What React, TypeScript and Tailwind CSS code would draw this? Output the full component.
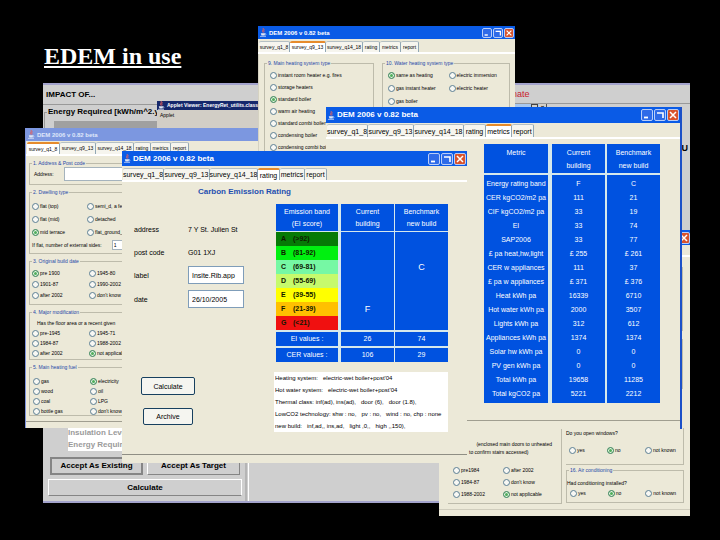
import type { ReactNode } from "react";

const TABS = ["survey_q1_8", "survey_q9_13", "survey_q14_18", "rating", "metrics", "report"];

function JavaCup() {
  return (
    <svg viewBox="0 0 10 12" className="h-[9px] w-[8px] shrink-0" fill="none">
      <path d="M5 0C7 2 3 3 5 6M7 2C5 4 7 4 6 6" stroke="#e8605a" strokeWidth="1.2" />
      <path d="M2 7H8L7 10H3Z" fill="#dfe6f5" />
      <path d="M8 7.500C10 7.500 9 9.500 7.500 9.500M1 11.200H9" stroke="#dfe6f5" strokeWidth="0.900" />
    </svg>
  );
}

function Controls({ size }: { size: string }) {
  const base = `${size} flex items-center justify-center rounded-[2px] border border-[#b9cdf8]`;
  return (
    <div className="ml-auto flex gap-px">
      <button aria-label="Minimize" className={`${base} bg-[#2f6be8]`}>
        <svg viewBox="0 0 10 10" className="size-full"><path d="M2 7.500H6" stroke="#fff" strokeWidth="1.800" /></svg>
      </button>
      <button aria-label="Maximize" className={`${base} bg-[#2f6be8]`}>
        <svg viewBox="0 0 10 10" className="size-full" fill="none"><path d="M2 3H8V8" stroke="#fff" strokeWidth="1.600" /></svg>
      </button>
      <button aria-label="Close" className={`${base} bg-[#d9532c]`}>
        <svg viewBox="0 0 10 10" className="size-full"><path d="M2 2L8 8M8 2L2 8" stroke="#fff" strokeWidth="1.500" /></svg>
      </button>
    </div>
  );
}

type WinProps = {
  place: string;
  bar: string;
  title: string;
  controls?: string;
  tabRow: string;
  widths: string[];
  active: number;
  children: ReactNode;
};

function Win({ place, bar, title, controls, tabRow, widths, active, children }: WinProps) {
  return (
    <section className={`absolute flex flex-col overflow-hidden bg-[#ece9d8] ${place}`}>
      <header className={`flex shrink-0 items-center gap-[2px] px-px ${bar}`}>
        <JavaCup />
        <h2 className={`whitespace-nowrap font-bold ${title}`}>DEM 2006 v 0.82 beta</h2>
        {controls && <Controls size={controls} />}
      </header>
      <nav className={`flex shrink-0 items-end border-b-2 border-white pl-px ${tabRow}`}>
        {TABS.map((t, i) => (
          <button
            key={t}
            className={`flex h-full shrink-0 items-center justify-center whitespace-nowrap rounded-t-[2px] border-r border-[#91a7b4] ${widths[i]} ${
              i === active ? "border-t-2 border-t-[#e68b2c] bg-white" : "border-t border-t-[#b5c0c4] bg-[#f6f5ee]"
            }`}
          >
            {t}
          </button>
        ))}
      </nav>
      {children}
    </section>
  );
}

function Radio({ name, label, on }: { name: string; label: string; on?: boolean }) {
  return (
    <label className="flex min-w-0 items-center gap-px whitespace-nowrap">
      <input
        type="radio"
        name={name}
        defaultChecked={on}
        className="size-[7px] shrink-0 appearance-none rounded-full border border-[#5b7f93] bg-[#f8f8f4] checked:border-[#4a8a6a] checked:bg-[#4fae5c] checked:shadow-[inset_0_0_0_1px_#e8f4e4]"
      />
      {label}
    </label>
  );
}

function Group({ legend, className, children }: { legend: string; className: string; children: ReactNode }) {
  return (
    <fieldset className={`min-w-0 border border-[#bdbbab] ${className}`}>
      <legend className="ml-[2px] h-[8px] whitespace-nowrap px-px leading-[8px] text-[#1f48a8]">{legend}</legend>
      {children}
    </fieldset>
  );
}

function Options({ name, items, on, className }: { name: string; items: string[]; on: number; className: string }) {
  return (
    <div className={`grid ${className}`}>
      {items.map((t, i) => (
        <Radio key={t} name={name} label={t} on={i === on} />
      ))}
    </div>
  );
}

function ImpactWindow() {
  return (
    <section className="absolute left-[43px] top-[83px] flex h-[420px] w-[647px] flex-col justify-between overflow-hidden border-y-2 border-[#a3a3cc] bg-[#cfcfcf] font-bold">
      <div className="flex">
        <div className="w-[114px] shrink-0">
          <h2 className="h-[20px] border-b border-[#999] pl-[3px] text-[8px] leading-[20px]">IMPACT OF...</h2>
          <fieldset className="ml-px mt-[2px] h-[40px] border border-r-0 border-[#999]">
            <legend className="ml-[2px] h-[10px] whitespace-nowrap px-px text-[8px] leading-[10px]">Energy Required [kWh/m^2.y]</legend>
            <div className="ml-[9px] mt-[4px] h-[20px] bg-[#a0a0a0]" />
          </fieldset>
        </div>
        <div className="mt-[16px] w-[320px] shrink-0 bg-[#d2cec6] text-[5px]">
          <div className="flex h-[9px] items-center gap-[2px] bg-[#15286c] text-white">
            <JavaCup />
            Applet Viewer: EnergyRet_utilits.class
          </div>
          <p className="pl-[3px] font-normal leading-[10px]">Applet</p>
        </div>
        <div className="flex-1">
          <h2 className="h-[19px] border-b border-[#999] pl-[22px] text-[9px] font-normal leading-[19px] text-[#c8202c]">Climate</h2>
          <div className="flex h-[40px] w-[70px] justify-end gap-px border-r border-[#555] bg-[#a9c8ee]">
            <button aria-label="Restore" className="h-[6px] w-[7px] border border-[#444] bg-[#d4d0c8]" />
            <button aria-label="Close applet" className="h-[6px] w-[7px] bg-[#d4d0c8] text-[6px] leading-[6px]">×</button>
          </div>
          <p className="pr-[2px] text-right text-[9px] leading-[9px]">U</p>
        </div>
      </div>
      <div className="flex text-[8px]">
        <div className="w-[204px] shrink-0 border-r-2 border-[#b5b5b5]">
          <div className="ml-[25px] w-[70px] bg-white leading-[12px] text-[#9b9b9b]">
            <p className="whitespace-nowrap">Insulation Level</p>
            <p className="whitespace-nowrap">Energy Required</p>
          </div>
          <div className="mt-[6px] grid grid-cols-2 gap-[4px] pl-[7px] pr-[5px]">
            <button className="h-[18px] whitespace-nowrap border-2 border-[#858585]">Accept As Existing</button>
            <button className="h-[18px] whitespace-nowrap border border-[#858585] border-l-white border-t-white">Accept As Target</button>
          </div>
          <button className="mb-[5px] ml-[5px] mt-[4px] block h-[17px] w-[194px] border border-white border-b-[#858585]">Calculate</button>
        </div>
        <div className="ml-px flex-1 border-l border-white" />
      </div>
    </section>
  );
}

function SystemsWindow() {
  return (
    <Win
      place="left-[258px] top-[26px] h-[140px] w-[257px] text-[5px]"
      bar="h-[13px] bg-[#0a5be6] text-white"
      title="text-[6px]"
      controls="size-[10px]"
      tabRow="h-[15px] pt-[2px]"
      widths={["w-[31px]", "w-[36px]", "w-[37px]", "w-[17px]", "w-[21px]", "w-[18px]"]}
      active={1}
    >
      <div className="flex flex-1 gap-[8px] border-l border-[#d5d2c2] px-[5px] pt-[5px]">
        <Group legend="9. Main heating system type" className="w-[110px]">
          <Options
            name="heating"
            on={2}
            className="auto-rows-[12px] pl-[5px] pt-[2px]"
            items={["instant room heater e.g. fires", "storage heaters", "standard boiler", "warm air heating", "standard combi boiler", "condensing boiler", "condensing combi boiler"]}
          />
        </Group>
        <Group legend="10. Water heating system type" className="flex-1">
          <Options
            name="water"
            on={0}
            className="auto-rows-[13px] grid-cols-2 pl-[5px] pt-[2px]"
            items={["same as heating", "electric immersion", "gas instant heater", "electric heater", "gas boiler"]}
          />
        </Group>
      </div>
    </Win>
  );
}

function DwellingWindow() {
  return (
    <Win
      place="left-[25px] top-[128px] h-[300px] w-[240px] border-l border-[#7d93dc] text-[5px]"
      bar="h-[13px] bg-[#7c97e0] text-[#dfe7fa]"
      title="text-[6px]"
      tabRow="h-[15px] pt-px"
      widths={["w-[33px]", "w-[36px]", "w-[38px]", "w-[17px]", "w-[20px]", "w-[18px]"]}
      active={0}
    >
      <div className="flex flex-1 flex-col gap-[3px] pl-[3px] pt-[3px]">
        <Group legend="1. Address & Post code" className="h-[26px]">
          <label className="flex items-center gap-[10px] pl-[4px]">
            Address:
            <input className="h-[14px] flex-1 border border-[#a5b3bd] bg-white" />
          </label>
        </Group>
        <Group legend="2. Dwelling type" className="h-[66px]">
          <Options
            name="dwelling"
            on={4}
            className="auto-rows-[13px] grid-cols-[55px_1fr] pl-[2px] pt-[4px]"
            items={["flat (top)", "semi_d, a few", "flat (mid)", "detached", "mid terrace", "flat_ground_"]}
          />
          <label className="flex h-[12px] items-center gap-[10px] whitespace-nowrap pl-[2px]">
            If flat, number of external sides:
            <input defaultValue="1" className="h-[10px] w-[20px] border border-[#a5b3bd] bg-white px-px" />
          </label>
        </Group>
        <Group legend="3. Original build date" className="h-[48px]">
          <Options
            name="built"
            on={0}
            className="auto-rows-[11px] grid-cols-[57px_1fr] pl-[2px] pt-[3px]"
            items={["pre 1900", "1945-80", "1901-87", "1990-2002", "after 2002", "don't know"]}
          />
        </Group>
        <Group legend="4. Major modification" className="h-[52px]">
          <p className="whitespace-nowrap pl-[7px] pt-[2px] leading-[10px]">Has the floor area or a recent given</p>
          <Options
            name="modified"
            on={5}
            className="auto-rows-[10px] grid-cols-[57px_1fr] pl-[2px]"
            items={["pre-1945", "1945-71", "1984-87", "1988-2002", "after 2002", "not applicable"]}
          />
        </Group>
        <Group legend="5. Main heating fuel" className="h-[53px]">
          <Options
            name="fuel"
            on={1}
            className="auto-rows-[10px] grid-cols-[57px_1fr] pl-[3px] pt-[5px]"
            items={["gas", "electricity", "wood", "oil", "coal", "LPG", "bottle gas", "don't know"]}
          />
        </Group>
        <div className="-ml-[3px] mt-[2px] border-t border-[#a09e90]" />
      </div>
    </Win>
  );
}

function ConditioningWindow() {
  return (
    <section className="absolute left-[439px] top-[230px] flex h-[286px] w-[251px] flex-col bg-[#ece9d8] text-[5px]">
      <header className="flex h-[15px] shrink-0 items-center bg-[#0a5be6]">
        <Controls size="size-[12px]" />
      </header>
      <div className="mt-[10px] h-[2px] bg-white" />
      <div className="mr-[7px] mt-[10px] h-[64px] border border-[#bdbbab]" />
      <div className="mr-[7px] mt-[8px] h-[50px] border border-[#bdbbab]" />
      <div className="mt-auto flex gap-[4px] pl-[9px] pr-[6px]">
        <div className="flex h-[76px] w-[114px] flex-col border-b border-r border-[#bdbbab] pt-[12px]">
          <p className="self-end whitespace-nowrap pr-[9px] leading-[8px]">(enclosed main doors to unheated</p>
          <p className="whitespace-nowrap pl-[21px] leading-[8px]">to confirm stairs accessed)</p>
          <Options
            name="zone"
            on={5}
            className="auto-rows-[12px] grid-cols-[50px_1fr] pl-[5px] pt-[8px]"
            items={["pre1984", "after 2002", "1984-87", "don't know", "1988-2002", "not applicable"]}
          />
        </div>
        <div className="flex-1">
          <div className="h-[37px] border-b border-r border-[#bdbbab]">
            <p className="whitespace-nowrap leading-[10px]">Do you open windows?</p>
            <Options name="windows" on={1} className="grid-cols-3 pl-[3px] pt-[9px]" items={["yes", "no", "not known"]} />
          </div>
          <Group legend="16. Air conditioning" className="mt-px h-[37px]">
            <p className="whitespace-nowrap pt-[5px] leading-[8px]">Had conditioning installed?</p>
            <Options name="aircon" on={1} className="grid-cols-3 pl-[3px] pt-[3px]" items={["yes", "no", "not known"]} />
          </Group>
        </div>
      </div>
      <div className="mb-[6px] mt-[5px] border-t border-[#d0cdbd]" />
    </section>
  );
}

const METRICS = [
  ["Energy rating band", "F", "C"],
  ["CER kgCO2/m2 pa", "111", "21"],
  ["CIF kgCO2/m2 pa", "33", "19"],
  ["EI", "33", "74"],
  ["SAP2006", "33", "77"],
  ["£ pa heat,hw,light", "£ 255", "£ 261"],
  ["CER w appliances", "111", "37"],
  ["£ pa w appliances", "£ 371", "£ 376"],
  ["Heat kWh pa", "16339", "6710"],
  ["Hot water kWh pa", "2000", "3507"],
  ["Lights kWh pa", "312", "612"],
  ["Appliances kWh pa", "1374", "1374"],
  ["Solar hw kWh pa", "0", "0"],
  ["PV gen kWh pa", "0", "0"],
  ["Total kWh pa", "19658", "11285"],
  ["Total kgCO2 pa", "5221", "2212"],
];

function MetricsWindow() {
  return (
    <Win
      place="left-[326px] top-[107px] h-[322px] w-[356px] border-r-2 border-[#1c50c8] text-[7px]"
      bar="h-[16px] bg-[#0a5be6] text-white"
      title="text-[8px]"
      controls="size-[12px]"
      tabRow="h-[16px] pt-px"
      widths={["w-[41px]", "w-[46px]", "w-[50px]", "w-[22px]", "w-[26px]", "w-[22px]"]}
      active={4}
    >
      <table className="ml-auto mr-[20px] mt-[5px] w-[176px] table-fixed border-separate border-spacing-0 text-center text-[7px] text-white">
        <colgroup>
          <col className="w-[68px]" />
          <col className="w-[55px]" />
          <col className="w-[53px]" />
        </colgroup>
        <thead>
          <tr className="h-[31px] align-top leading-[13px]">
            {["Metric", "Current building", "Benchmark new build"].map((h, i) => (
              <th key={h} scope="col" className={`border-b-2 border-[#d5e8ec] bg-[#0052e0] px-[5px] pt-[2px] font-normal ${i === 0 ? "border-r-4" : i === 1 ? "border-r-2" : ""}`}>
                {h}
              </th>
            ))}
          </tr>
        </thead>
        <tbody>
          {METRICS.map((row, r) => (
            <tr key={r} className="h-[14px] leading-[14px]">
              {row.map((c, i) => (
                <td key={i} className={`whitespace-nowrap border-[#d5e8ec] bg-[#0052e0] p-0 ${r === 0 ? "pt-[2px]" : ""} ${r === 15 ? "pb-[2px]" : ""} ${i === 0 ? "border-r-4" : i === 1 ? "border-r-2" : ""}`}>
                  {c}
                </td>
              ))}
            </tr>
          ))}
        </tbody>
      </table>
      <div className="mb-[8px] mt-auto border-t border-[#a09e90]" />
    </Win>
  );
}

const BANDS = [
  ["A", "(>92)", "bg-[#067a06]"],
  ["B", "(81-92)", "bg-[#00f010]"],
  ["C", "(69-81)", "bg-[#76f8a4]"],
  ["D", "(55-69)", "bg-[#c6fa6c]"],
  ["E", "(39-55)", "bg-[#ffff00]"],
  ["F", "(21-39)", "bg-[#ffc000]"],
  ["G", "(<21)", "bg-[#f01010]"],
];

const DETAILS = [
  ["address", "7 Y St. Julien St"],
  ["post code", "G01 1XJ"],
];

function RatingWindow() {
  return (
    <Win
      place="left-[122px] top-[151px] h-[312px] w-[345px] text-[7px]"
      bar="h-[15px] bg-[#0a5be6] text-white"
      title="text-[8px]"
      controls="size-[12px]"
      tabRow="h-[16px] pt-[2px]"
      widths={["w-[41px]", "w-[46px]", "w-[48px]", "w-[22px]", "w-[25px]", "w-[22px]"]}
      active={3}
    >
      <h3 className="pl-[76px] pt-[4px] text-[8px] font-bold leading-[12px] text-[#1f50b0]">Carbon Emission Rating</h3>
      <div className="flex justify-between pl-[12px] pr-[19px] pt-[6px]">
        <div className="w-[110px]">
          <dl className="grid grid-cols-[54px_1fr] pt-[14px] leading-[23px]">
            {DETAILS.map(([k, v]) => (
              <div key={k} className="contents">
                <dt>{k}</dt>
                <dd className="whitespace-nowrap">{v}</dd>
              </div>
            ))}
          </dl>
          <div className="mt-[2px] flex flex-col gap-[6px]">
            <label className="flex items-center justify-between">
              label
              <input defaultValue="Insite.Rib.app" className="h-[18px] w-[56px] border border-[#7f9db9] bg-white px-[3px]" />
            </label>
            <label className="flex items-center justify-between">
              date
              <input defaultValue="26/10/2005" className="h-[18px] w-[56px] border border-[#7f9db9] bg-white px-[3px]" />
            </label>
          </div>
          <div className="flex flex-col items-center gap-[13px] pr-[42px] pt-[69px]">
            <button className="h-[18px] w-[54px] rounded-[2px] border border-[#17405f] bg-[#f5f5f0]">Calculate</button>
            <button className="h-[17px] w-[50px] rounded-[2px] border border-[#17405f] bg-[#f5f5f0]">Archive</button>
          </div>
        </div>
        <div className="w-[174px]">
          <table className="ml-[2px] w-[172px] table-fixed border-separate border-spacing-0 text-center text-white">
            <colgroup>
              <col className="w-[65px]" />
              <col className="w-[54px]" />
              <col className="w-[53px]" />
            </colgroup>
            <thead>
              <tr className="h-[28px] leading-[12px]">
                {["Emission band (EI score)", "Current building", "Benchmark new build"].map((h, i) => (
                  <th key={h} scope="col" className={`border-b border-[#d5e8ec] bg-[#0052e0] px-[4px] py-0 font-normal ${i === 0 ? "border-r-[3px]" : i === 1 ? "border-r" : ""}`}>
                    {h}
                  </th>
                ))}
              </tr>
            </thead>
            <tbody className="leading-[14px]">
              {BANDS.map(([band, range, color]) => (
                <tr key={band} className="h-[14px]">
                  <td className={`border-r-[3px] border-[#d5e8ec] p-0 pl-[5px] text-left font-bold text-[#101800] ${color}`}>
                    <span className="inline-block w-[12px]">{band}</span>
                    {range}
                  </td>
                  <td className="border-r border-[#d5e8ec] bg-[#0052e0] p-0 text-[9px]">{band === "F" && "F"}</td>
                  <td className="bg-[#0052e0] p-0 text-[9px]">{band === "C" && "C"}</td>
                </tr>
              ))}
              {[["EI values :", "26", "74"], ["CER values :", "106", "29"]].map((row) => (
                <tr key={row[0]} className="h-[16px]">
                  {row.map((c, i) => (
                    <td key={i} className={`border-t-2 border-[#d5e8ec] bg-[#0052e0] p-0 ${i === 0 ? "border-r-[3px]" : i === 1 ? "border-r" : ""}`}>
                      {c}
                    </td>
                  ))}
                </tr>
              ))}
            </tbody>
          </table>
          <div className="mt-[10px] overflow-hidden whitespace-nowrap bg-white pl-px text-[6px] leading-[12px]">
            <p>Heating system: &nbsp; electric-wet boiler+post'04</p>
            <p>Hot water system: &nbsp; electric-wet boiler+post'04</p>
            <p>Thermal class: inf(ad), ins(ad), &nbsp; door (6), &nbsp; door (1.8),</p>
            <p>LowCO2 technology: shw : no, &nbsp; pv : no, &nbsp; wind : no, chp : none</p>
            <p>new build: &nbsp; inf,ad,, ins,ad, &nbsp; light ,0,, &nbsp; high ,,150),</p>
          </div>
        </div>
      </div>
      <div className="mb-[8px] mt-auto border-t border-[#8f8e84]" />
    </Win>
  );
}

export default function App() {
  return (
    <main className="relative min-h-screen overflow-hidden bg-black font-['Liberation_Sans',Arial,sans-serif] leading-none text-black">
      <h1 className="pl-[44px] pt-[41px] font-['Liberation_Serif','Times_New_Roman',serif] text-[24px] font-bold leading-[30px] text-white underline decoration-2 underline-offset-2">
        EDEM in use
      </h1>
      <ImpactWindow />
      <DwellingWindow />
      <SystemsWindow />
      <ConditioningWindow />
      <MetricsWindow />
      <RatingWindow />
    </main>
  );
}
